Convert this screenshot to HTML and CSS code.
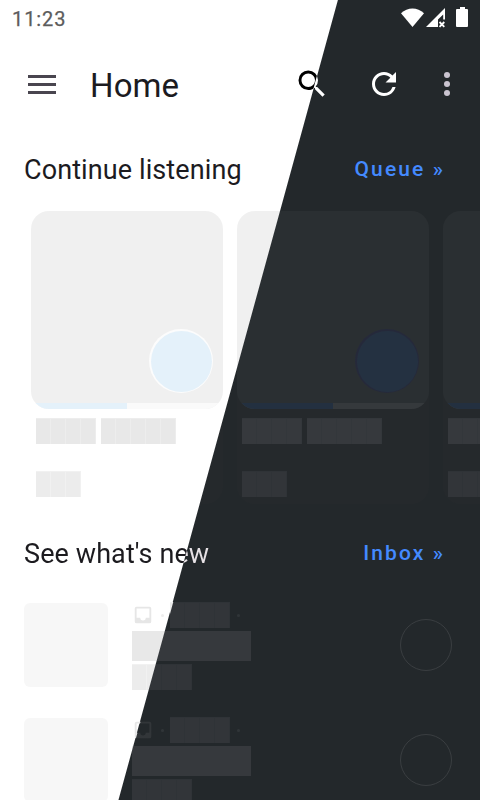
FILE: index.html
```html
<!DOCTYPE html>
<html lang="en">
<head>
<meta charset="utf-8">
<title>Home</title>
<link rel="stylesheet" href="styles.css">
</head>
<body>
<div class="screen">
  <header class="status">
    <span class="time">11:23</span>
    <svg class="status-icons" viewBox="0 0 70 22" aria-hidden="true">
      <path d="M1 6.200C7.500-.2 17.500-.2 24 6.200L12.500 20z"/>
      <path fill-rule="evenodd" d="M45 1v11.500h-1.800V7.500L38 12.500V20H26z"/>
      <path class="cross" d="M39.500 15l4.800 4.800M44.300 15L39.500 19.800"/>
      <path d="M60 0h5v2h2q1 0 1 1v16q0 1-1 1H57q-1 0-1-1V3q0-1 1-1h3z"/>
    </svg>
  </header>
  <nav class="appbar">
    <svg class="menu" viewBox="0 0 28 19"><path d="M0 0h28v3H0zM0 8h28v3H0zM0 16h28v3H0z"/></svg>
    <h1>Home</h1>
    <svg class="icon search" viewBox="0 0 24 24">
      <linearGradient id="searchSplit" gradientUnits="userSpaceOnUse" x1="13.5" y1="11.92" x2="14.1" y2="12.08"><stop offset="0" stop-color="#000"/><stop offset="1" stop-color="#fff"/></linearGradient>
      <path fill="url(#searchSplit)" d="M15.500 14h-.79l-.28-.27A6.471 6.471 0 0 0 16 9.500 6.500 6.500 0 1 0 9.500 16c1.610 0 3.090-.59 4.230-1.570l.27.280v.790l5 4.990L20.490 19l-4.990-5zm-6 0C7.010 14 5 11.990 5 9.500S7.010 5 9.500 5 14 7.010 14 9.500 11.990 14 9.500 14z"/>
    </svg>
    <svg class="icon refresh" viewBox="0 0 24 24"><path d="M17.650 6.350A7.958 7.958 0 0 0 12 4c-4.420 0-7.990 3.580-7.990 8s3.570 8 7.990 8c3.730 0 6.840-2.550 7.730-6h-2.080A5.990 5.990 0 0 1 12 18c-3.310 0-6-2.690-6-6s2.690-6 6-6c1.660 0 3.140.690 4.220 1.780L13 11h7V4z"/></svg>
    <svg class="icon more" viewBox="0 0 24 24"><circle cx="12" cy="6" r="2"/><circle cx="12" cy="12" r="2"/><circle cx="12" cy="18" r="2"/></svg>
  </nav>
  <main>
    <div class="heading"><h2>Continue listening</h2><a>Queue »</a></div>
    <section class="cards">
      <article class="card">
        <div class="cover"><div class="play"></div><div class="progress"><i></i></div></div>
        <div class="words"><span class="block w4"></span><span class="block w5"></span></div>
        <div class="words sub"><span class="block w3 soft"></span></div>
      </article>
      <article class="card">
        <div class="cover"><div class="play"></div><div class="progress"><i></i></div></div>
        <div class="words"><span class="block w4"></span><span class="block w5"></span></div>
        <div class="words sub"><span class="block w3 soft"></span></div>
      </article>
      <article class="card">
        <div class="cover"><div class="play"></div><div class="progress"><i></i></div></div>
        <div class="words"><span class="block w4"></span><span class="block w5"></span></div>
        <div class="words sub"><span class="block w3 soft"></span></div>
      </article>
    </section>
    <div class="heading second"><h2 class="split-text">See what's new</h2><a>Inbox »</a></div>
    <section class="list">
      <article class="row">
        <div class="thumb"></div>
        <div class="info">
          <div class="meta">
            <svg class="inbox" viewBox="0 0 24 24"><path fill="#e6e6e6" d="M19 3H5a2 2 0 0 0-2 2v14a2 2 0 0 0 2 2h14a2 2 0 0 0 2-2V5a2 2 0 0 0-2-2zm0 12h-4a3 3 0 0 1-6 0H5V5h14z"/></svg>
            <i class="dot"></i><span class="block w4 soft"></span><i class="dot"></i>
          </div>
          <div class="title"></div>
          <span class="block w4 soft"></span>
        </div>
        <div class="ring"></div>
      </article>
      <article class="row">
        <div class="thumb"></div>
        <div class="info">
          <div class="meta">
            <svg class="inbox" viewBox="0 0 24 24">
              <linearGradient id="inboxSplit" gradientUnits="userSpaceOnUse" x1="6.3" y1="11.86" x2="7.3" y2="12.14"><stop offset="0" stop-color="#e6e6e6"/><stop offset="1" stop-color="#323639"/></linearGradient>
              <path fill="url(#inboxSplit)" d="M19 3H5a2 2 0 0 0-2 2v14a2 2 0 0 0 2 2h14a2 2 0 0 0 2-2V5a2 2 0 0 0-2-2zm0 12h-4a3 3 0 0 1-6 0H5V5h14z"/>
            </svg>
            <i class="dot"></i><span class="block w4 soft"></span><i class="dot"></i>
          </div>
          <div class="title"></div>
          <span class="block w4 soft"></span>
        </div>
        <div class="ring"></div>
      </article>
    </section>
  </main>
</div>
</body>
</html>
```
FILE: styles.css
```css
* { box-sizing: border-box; }
html, body { margin: 0; height: 800px; overflow: hidden; }
body { font-family: Roboto, sans-serif; }

/* Every surface is painted with a light/dark gradient fixed to the viewport,
   so the diagonal theme edge lines up across all elements. */
.screen, .card, .cover, .play, .play::before, .progress, .progress i,
.block, .block::before, .title, .thumb, .dot, .split-text {
  background: linear-gradient(105.34deg, var(--l) calc(50% - 11.9px), var(--d) calc(50% - 10.9px)) fixed;
}

.screen {
  --l: #fff; --d: #23282b;
  width: 480px; height: 800px; overflow: hidden;
  display: flex; flex-direction: column;
}

.status { height: 36px; flex: none; display: flex; justify-content: space-between; padding: 7px 10px 0 12px; }
.time { font-size: 20px; line-height: 24px; font-weight: 400; letter-spacing: .9px; color: #5c5c5c; -webkit-text-stroke: .25px #5c5c5c; }
.status-icons { width: 70px; height: 22px; fill: #fff; }
.cross { stroke: #fff; stroke-width: 1.8; }

.appbar { height: 96px; flex: none; display: flex; align-items: center; padding-left: 28px; }
.menu { width: 28px; height: 19px; fill: #49454f; }
h1 { margin: 3px 0 0 34px; width: 204px; font-size: 33px; line-height: 40px; font-weight: 400; letter-spacing: .1px; color: #1c1b1f; }
.icon { width: 36px; height: 36px; flex: none; fill: #fff; }
.refresh { margin-left: 36px; }
.more { margin-left: 27px; fill: #cac4d0; }

.heading { height: 79px; display: flex; justify-content: space-between; padding: 20px 34px 0 24px; }
h2 { margin: 0; height: 36px; font-size: 27px; line-height: 36px; font-weight: 400; letter-spacing: .1px; color: #1c1b1f; }
.split-text { --l: #1c1b1f; --d: #e6e1e5; -webkit-background-clip: text; background-clip: text; color: transparent; }
.heading a { font-size: 21px; line-height: 34px; font-weight: 500; letter-spacing: 2.1px; color: #448aff; margin-right: 1px; }

.cards { display: flex; gap: 14px; padding-left: 31px; height: 293px; overflow: hidden; }
.card { --l: #fff; --d: #25292c; width: 192px; height: 293px; flex: none; border-radius: 18px; }
.cover { --l: #f0f0f0; --d: #2a2f32; height: 198px; border-radius: 18px; overflow: hidden; display: flex; flex-direction: column; align-items: flex-end; justify-content: flex-end; }
.play { --l: #fcfcfc; --d: #25293a; width: 64px; height: 64px; border-radius: 50%; margin: 0 10px 10px 0; padding: 1.5px; }
.play::before { --l: #e4f1fa; --d: #243141; content: ""; display: block; height: 100%; border-radius: 50%; }
.progress { --l: #fafafa; --d: #35393c; width: 100%; height: 6px; flex: none; }
.progress i { --l: #e4f1fa; --d: #233040; display: block; width: 50%; height: 6px; }
.words { display: flex; gap: 5px; padding: 9px 0 0 5px; }
.words.sub { padding-top: 27px; }

/* Placeholder words: 15px cells with faint seams and a soft top edge. */
.block { --l: #e8e8e8; --d: #36393d; display: block; position: relative; height: 26px; flex: none; }
.block::before {
  --l: #ededed; --d: #33373b;
  content: ""; position: absolute; inset: 0;
  -webkit-mask: repeating-linear-gradient(90deg, transparent 0 14px, #000 14px 15px), linear-gradient(#000, #000) 0 0 / 100% 1px no-repeat;
  mask: repeating-linear-gradient(90deg, transparent 0 14px, #000 14px 15px), linear-gradient(#000, #000) 0 0 / 100% 1px no-repeat;
}
.block.soft { --l: #ececec; --d: #323539; }
.block.soft::before { --l: #f1f1f1; --d: #2f3337; }
.w3 { width: 45px; }
.w4 { width: 60px; }
.w5 { width: 75px; }

.heading.second { height: 99px; padding-top: 32px; }

.list { display: flex; flex-direction: column; gap: 27px; }
.row { height: 88px; flex: none; display: flex; padding: 0 28px 0 24px; }
.thumb { --l: #f7f7f7; --d: #2a2f32; width: 84px; height: 84px; border-radius: 6px; flex: none; }
.info { margin: -1px 0 0 24px; flex: 1; }
.meta { display: flex; align-items: center; height: 26px; }
.inbox { width: 22px; height: 22px; margin: 0 7px 0 -.5px; flex: none; }
.dot { --l: #ededed; --d: #303538; width: 3px; height: 3px; border-radius: 50%; flex: none; }
.meta .block { margin: 0 7px 0 6px; }
.title { --l: #e8e8e8; --d: #36393d; width: 119px; height: 30px; margin: 3px 0; }
.ring { width: 52px; height: 52px; margin-top: 16px; border: 1px solid #3a3e41; border-radius: 50%; flex: none; }
```
